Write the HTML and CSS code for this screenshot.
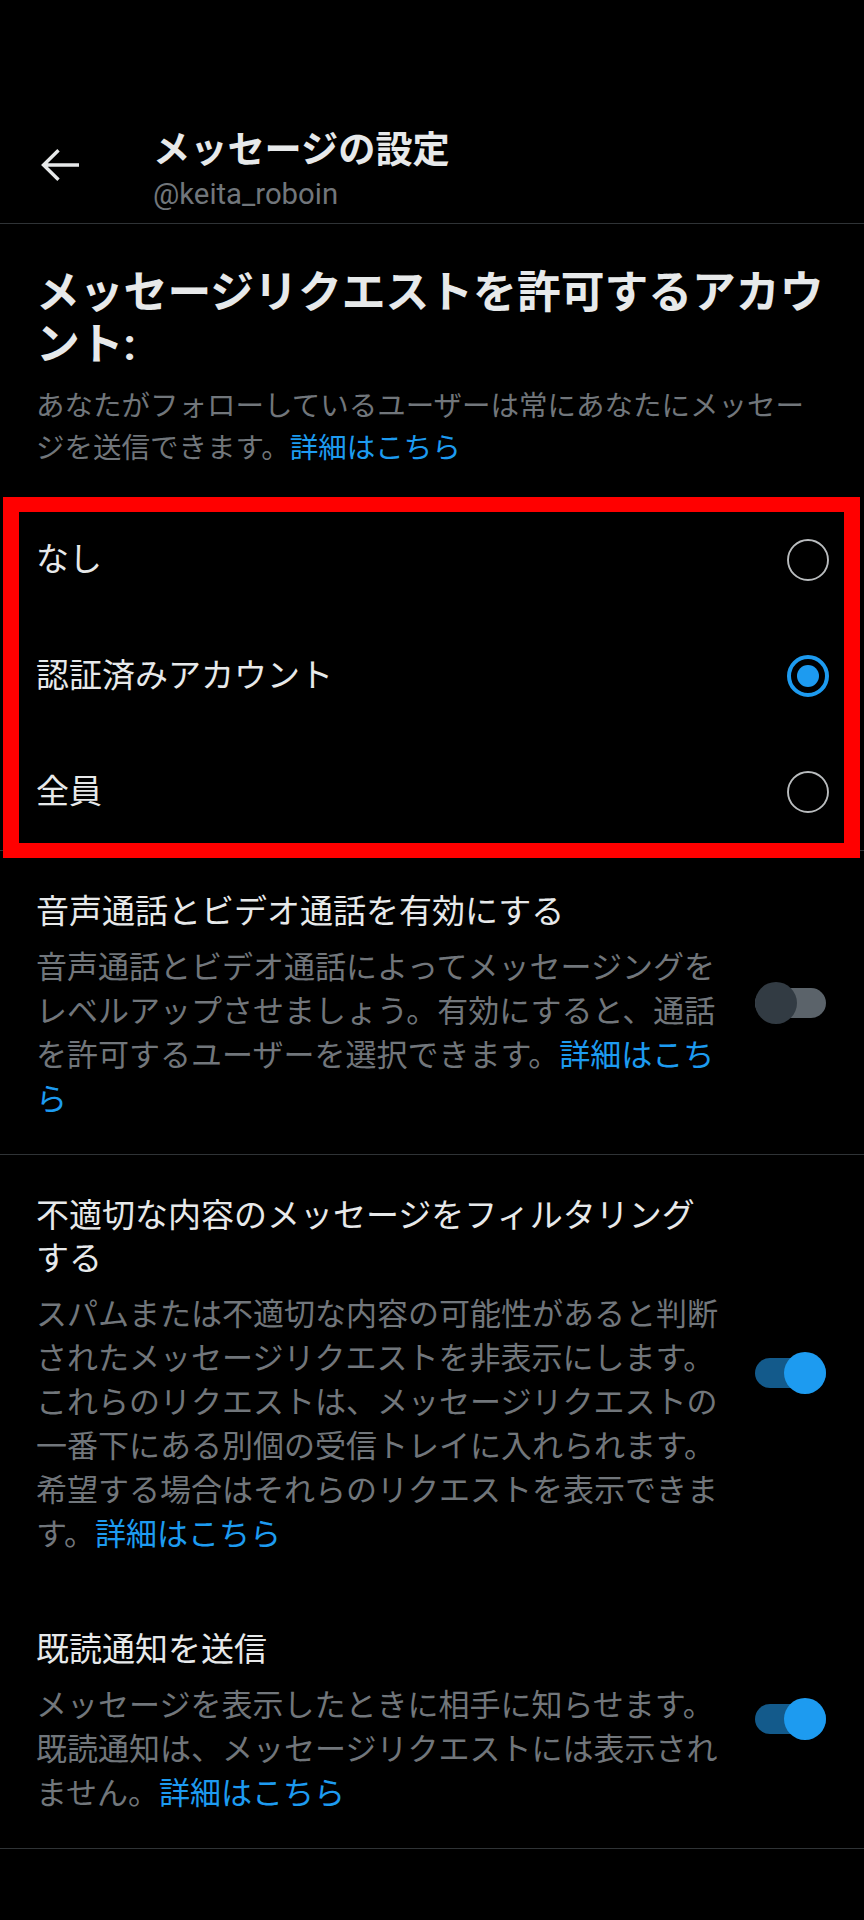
FILE: index.html
```html
<!DOCTYPE html>
<html lang="ja">
<head>
<meta charset="utf-8">
<meta name="viewport" content="width=864">
<title>メッセージの設定</title>
<link rel="stylesheet" href="styles.css">
</head>
<body>
<div class="screen">
  <header class="topbar">
    <button class="back" aria-label="戻る">
      <svg width="40" height="34" viewBox="0 0 40 34" aria-hidden="true">
        <path d="M2.5 17H38M17.5 2.2L2.5 17L17.5 31.8" fill="none" stroke="#e7e9ea" stroke-width="3.4"/>
      </svg>
    </button>
    <div class="titles">
      <h1 class="title">メッセージの設定</h1>
      <div class="handle">@keita_roboin</div>
    </div>
  </header>

  <section class="intro">
    <h2 class="intro-heading">メッセージリクエストを許可するアカウント:</h2>
    <p class="intro-text">あなたがフォローしているユーザーは常にあなたにメッセージを送信できます。<a class="link" href="#">詳細はこちら</a></p>
  </section>

  <ul class="options">
    <li class="option">
      <span class="option-label">なし</span>
      <svg class="radio" width="42" height="42" viewBox="0 0 42 42" aria-hidden="true">
        <circle cx="21" cy="21" r="20" fill="none" stroke="#b9bcbe" stroke-width="1.9"/>
      </svg>
    </li>
    <li class="option">
      <span class="option-label">認証済みアカウント</span>
      <svg class="radio" width="42" height="42" viewBox="0 0 42 42" aria-hidden="true">
        <circle cx="21" cy="21" r="19" fill="none" stroke="#1d9bf0" stroke-width="4"/>
        <circle cx="21" cy="21" r="11" fill="#1d9bf0"/>
      </svg>
    </li>
    <li class="option">
      <span class="option-label">全員</span>
      <svg class="radio" width="42" height="42" viewBox="0 0 42 42" aria-hidden="true">
        <circle cx="21" cy="21" r="20" fill="none" stroke="#b9bcbe" stroke-width="1.9"/>
      </svg>
    </li>
  </ul>

  <div class="annotation" aria-hidden="true"></div>

  <section class="setting divided">
    <div class="setting-text">
      <h3 class="setting-title">音声通話とビデオ通話を有効にする</h3>
      <p class="setting-desc">音声通話とビデオ通話によってメッセージングをレベルアップさせましょう。有効にすると、通話を許可するユーザーを選択できます。<a class="link" href="#">詳細はこちら</a></p>
    </div>
    <div class="switch off"><span class="track"></span><span class="thumb"></span></div>
  </section>

  <section class="setting">
    <div class="setting-text">
      <h3 class="setting-title">不適切な内容のメッセージをフィルタリングする</h3>
      <p class="setting-desc">スパムまたは不適切な内容の可能性があると判断されたメッセージリクエストを非表示にします。これらのリクエストは、メッセージリクエストの一番下にある別個の受信トレイに入れられます。希望する場合はそれらのリクエストを表示できます。<a class="link" href="#">詳細はこちら</a></p>
    </div>
    <div class="switch on"><span class="track"></span><span class="thumb"></span></div>
  </section>

  <section class="setting divided">
    <div class="setting-text">
      <h3 class="setting-title">既読通知を送信</h3>
      <p class="setting-desc">メッセージを表示したときに相手に知らせます。既読通知は、メッセージリクエストには表示されません。<a class="link" href="#">詳細はこちら</a></p>
    </div>
    <div class="switch on"><span class="track"></span><span class="thumb"></span></div>
  </section>
</div>
</body>
</html>
```

FILE: styles.css
```css
* {
  box-sizing: border-box;
}

html, body {
  margin: 0;
  padding: 0;
  background: #000000;
}

body {
  font-family: Roboto, "Noto Sans CJK JP", sans-serif;
  color: #e7e9ea;
}

.screen {
  position: relative;
  width: 864px;
  min-height: 1920px;
  background: #000000;
}

/* header */
.topbar {
  display: flex;
  align-items: flex-start;
  padding: 128px 0 9px 41px;
  border-bottom: 1px solid #2f3336;
}

.back {
  display: block;
  margin: 20px 72px 0 0;
  padding: 0;
  width: 40px;
  height: 34px;
  background: none;
  border: 0;
}

.back svg {
  display: block;
}

.titles {
  display: flex;
  flex-direction: column;
}

.title {
  margin: 0;
  font-size: 37.2px;
  line-height: 44px;
  font-weight: 700;
  color: #e7e9ea;
}

.handle {
  margin-top: 2px;
  font-size: 29.3px;
  line-height: 40px;
  color: #71767b;
}

/* intro */
.intro {
  padding: 43px 36px 33px 36px;
}

.intro-heading {
  margin: 0;
  font-size: 43.8px;
  line-height: 52px;
  font-weight: 700;
  color: #e7e9ea;
}

.intro-text {
  margin: 15px 0 0 0;
  font-size: 28.5px;
  line-height: 41.5px;
  color: #71767b;
}

.link {
  color: #1d9bf0;
  text-decoration: none;
}

/* options */
.options {
  list-style: none;
  margin: 0;
  padding: 0;
  border-bottom: 1px solid #2f3336;
}

.option {
  display: flex;
  align-items: center;
  justify-content: space-between;
  height: 116px;
  padding: 0 35px 0 36px;
}

.option-label {
  font-size: 33px;
  line-height: 44px;
  color: #e7e9ea;
}

.radio {
  display: block;
  flex: 0 0 auto;
}

/* red annotation frame over the options */
.annotation {
  position: absolute;
  left: 3px;
  top: 497px;
  width: 857px;
  height: 361px;
  border-style: solid;
  border-color: #ff0000;
  border-width: 15px 16px 15px 16px;
  pointer-events: none;
}

/* settings rows */
.setting {
  display: flex;
  align-items: center;
  gap: 29px;
  padding: 39px 38px 32px 36px;
}

.setting.divided {
  border-bottom: 1px solid #2f3336;
}

.setting-text {
  flex: 1 1 auto;
  min-width: 0;
}

.setting-title {
  margin: 0;
  font-size: 33px;
  line-height: 43px;
  font-weight: 400;
  color: #e7e9ea;
}

.setting-desc {
  margin: 13px 0 0 0;
  font-size: 31px;
  line-height: 44px;
  color: #71767b;
}

/* switch */
.switch {
  position: relative;
  flex: 0 0 71px;
  width: 71px;
  height: 42px;
  margin-bottom: 6px;
}

.track {
  position: absolute;
  left: 0;
  top: 6px;
  width: 71px;
  height: 30px;
  border-radius: 15px;
}

.thumb {
  position: absolute;
  top: 0;
  width: 42px;
  height: 42px;
  border-radius: 50%;
}

.switch.on .track {
  background: #135a8b;
}

.switch.on .thumb {
  left: 29px;
  background: #1d9bf0;
}

.switch.off .track {
  background: #5b636a;
}

.switch.off .thumb {
  left: 0;
  background: #323b43;
}
```
